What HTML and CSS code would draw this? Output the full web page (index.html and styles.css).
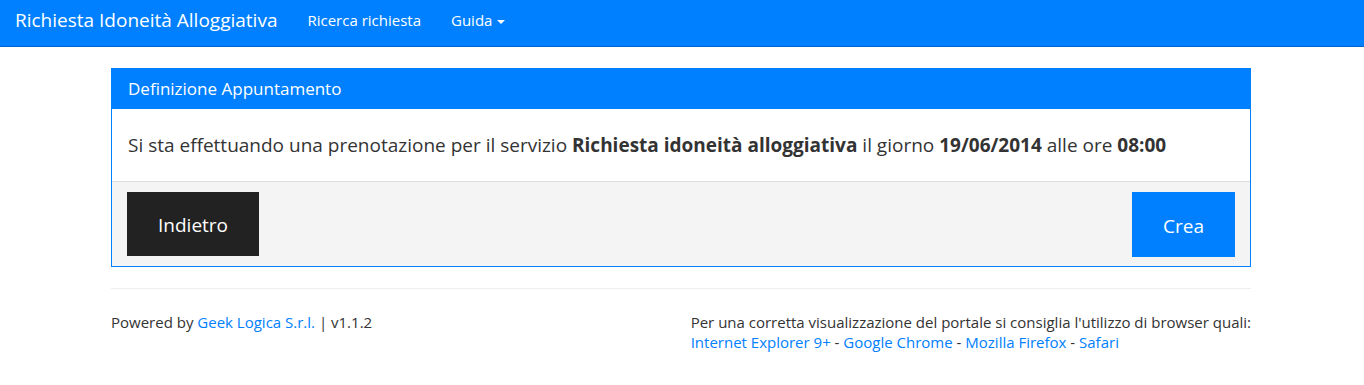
FILE: index.html
```html
<!DOCTYPE html>
<html lang="it">
<head>
<meta charset="utf-8">
<title>Richiesta Idoneità Alloggiativa</title>
<link rel="stylesheet" href="styles.css">
</head>
<body>
<nav class="navbar">
  <a class="brand" href="#">Richiesta Idoneità Alloggiativa</a>
  <ul class="nav">
    <li><a href="#">Ricerca richiesta</a></li>
    <li><a href="#">Guida <span class="caret"></span></a></li>
  </ul>
</nav>
<main class="container">
  <section class="panel">
    <div class="panel-heading">Definizione Appuntamento</div>
    <div class="panel-body">
      Si sta effettuando una prenotazione per il servizio <b>Richiesta idoneità alloggiativa</b> il giorno <b>19/06/2014</b> alle ore <b>08:00</b>
    </div>
    <div class="panel-footer">
      <button class="btn btn-dark">Indietro</button>
      <button class="btn btn-primary">Crea</button>
    </div>
  </section>
  <hr class="sep">
  <footer class="footer">
    <div class="powered">Powered by <a href="#">Geek Logica S.r.l.</a> | v1.1.2</div>
    <div class="browsers">
      Per una corretta visualizzazione del portale si consiglia l'utilizzo di browser quali:<br>
      <a href="#">Internet Explorer 9+</a> - <a href="#">Google Chrome</a> - <a href="#">Mozilla Firefox</a> - <a href="#">Safari</a>
    </div>
  </footer>
</main>
</body>
</html>
```
FILE: styles.css
```css
* { box-sizing: border-box; }
body {
  margin: 0;
  font-family: "Open Sans", "Liberation Sans", sans-serif;
  font-size: 15px;
  line-height: 20px;
  color: #333;
  background: #fff;
}
a { color: #0080ff; text-decoration: none; }

.navbar {
  display: flex;
  align-items: flex-start;
  height: 47px;
  background: #0080ff;
  border-bottom: 1px solid #0066cc;
  padding: 10px 15px 0;
}
.brand {
  color: #fff;
  font-size: 19px;
  line-height: 20px;
  margin-right: 15px;
}
.nav {
  display: flex;
  list-style: none;
  margin: 0;
  padding: 0;
}
.nav a {
  display: block;
  color: #fff;
  font-size: 15px;
  padding: 0 15px;
  line-height: 20px;
}
.caret {
  display: inline-block;
  width: 0;
  height: 0;
  margin-left: 1px;
  vertical-align: middle;
  border-top: 4px solid #fff;
  border-left: 4px solid transparent;
  border-right: 4px solid transparent;
}

.container {
  width: 1140px;
  margin: 21px 0 0 calc(50% - 571px);
}
.panel {
  border: 1px solid #0080ff;
}
.panel-heading {
  background: #0080ff;
  color: #fff;
  font-size: 17px;
  height: 40px;
  line-height: 20px;
  padding: 10px 16px;
}
.panel-body {
  font-size: 19px;
  line-height: 26px;
  padding: 23px 16px;
  border-bottom: 1px solid #ddd;
}
.panel-body b { font-weight: 700; }
.panel-footer {
  display: flex;
  justify-content: space-between;
  align-items: flex-start;
  background: #f4f4f4;
  padding: 10px 15px 9px;
}
.btn {
  border: 0;
  font-family: inherit;
  font-size: 19px;
  line-height: 27px;
  padding: 20px 31px 17px;
  color: #fff;
  cursor: pointer;
}
.btn-dark { background: #222; }
.btn-primary { background: #0080ff; height: 65px; }

.sep {
  border: 0;
  border-top: 1px solid #eee;
  margin: 21px 0 0;
}
.footer {
  display: flex;
  justify-content: space-between;
  padding-top: 23px;
}
.browsers { text-align: left; }
```
